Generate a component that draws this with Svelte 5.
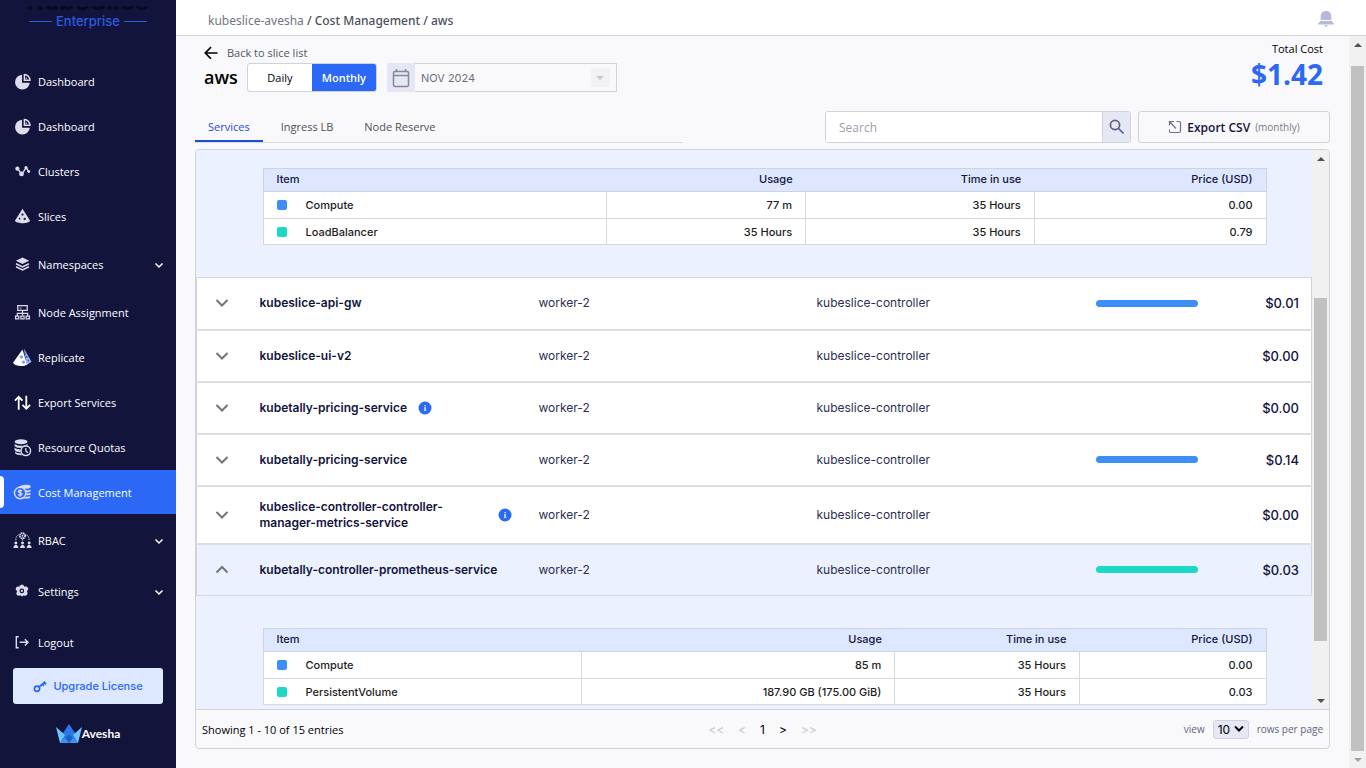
<script lang="ts">
  interface NavItem {
    label: string;
    icon: string;
    size?: 'tall';
    expandable?: boolean;
    active?: boolean;
  }

  interface CostItem {
    item: string;
    usage: string;
    time: string;
    price: string;
    color: string;
  }

  interface Service {
    name: string;
    bar?: string;
    price: string;
    info?: boolean;
    open?: boolean;
  }

  const BLUE = '#3d8ff5';
  const TEAL = '#1dd8c5';

  const nav: NavItem[] = [
    { label: 'Dashboard', icon: 'pie' },
    { label: 'Dashboard', icon: 'pie' },
    { label: 'Clusters', icon: 'clusters' },
    { label: 'Slices', icon: 'slice' },
    { label: 'Namespaces', icon: 'layers', size: 'tall', expandable: true },
    { label: 'Node Assignment', icon: 'nodes' },
    { label: 'Replicate', icon: 'replicate' },
    { label: 'Export Services', icon: 'export' },
    { label: 'Resource Quotas', icon: 'quotas' },
    { label: 'Cost Management', icon: 'cost', active: true },
    { label: 'RBAC', icon: 'rbac', size: 'tall', expandable: true },
    { label: 'Settings', icon: 'settings', size: 'tall', expandable: true },
    { label: 'Logout', icon: 'logout', size: 'tall' }
  ];

  const services: Service[] = [
    { name: 'kubeslice-api-gw', bar: BLUE, price: '$0.01' },
    { name: 'kubeslice-ui-v2', price: '$0.00' },
    { name: 'kubetally-pricing-service', price: '$0.00', info: true },
    { name: 'kubetally-pricing-service', bar: BLUE, price: '$0.14' },
    { name: 'kubeslice-controller-controller-manager-metrics-service', price: '$0.00', info: true },
    { name: 'kubetally-controller-prometheus-service', bar: TEAL, price: '$0.03', open: true }
  ];

  const loadBalancerCosts: CostItem[] = [
    { item: 'Compute', usage: '77 m', time: '35 Hours', price: '0.00', color: BLUE },
    { item: 'LoadBalancer', usage: '35 Hours', time: '35 Hours', price: '0.79', color: TEAL }
  ];

  const prometheusCosts: CostItem[] = [
    { item: 'Compute', usage: '85 m', time: '35 Hours', price: '0.00', color: BLUE },
    { item: 'PersistentVolume', usage: '187.90 GB (175.00 GiB)', time: '35 Hours', price: '0.03', color: TEAL }
  ];

  const tabs = ['Services', 'Ingress LB', 'Node Reserve'];

  let activeTab = $state('Services');
  let period = $state('Monthly');
  let search = $state('');
</script>

{#snippet navIcon(name: string)}
  <svg class="nav-icon" viewBox="0 0 20 20" fill="currentColor" aria-hidden="true">
    {#if name === 'pie'}
      <path d="M9.500 2.800a7.800 7.800 0 1 0 8.200 8.500H9.500z" />
      <path d="M12 2.600v6h5.800a6 6 0 0 0-5.800-6z" fill="none" stroke="currentColor" stroke-width="1.600" />
      <circle cx="14" cy="6.500" r=".8" />
    {:else if name === 'clusters'}
      <path d="M5 7l4 6 5-7 3 5" fill="none" stroke="currentColor" stroke-width="1.500" />
      <circle cx="4.600" cy="7" r="2.200" />
      <circle cx="9" cy="12.500" r="2.500" />
      <circle cx="13.700" cy="6" r="1.700" />
      <circle cx="16.500" cy="10" r="1.500" />
    {:else if name === 'slice'}
      <path fill-rule="evenodd" d="M10 1.800L2 14.500c1.500 3.500 14.500 3.500 16 0zM10 6.800a1.200 1.200 0 1 1 0 2.400 1.200 1.200 0 0 1 0-2.400zM12.300 11.300a1.200 1.200 0 1 1 0 2.400 1.200 1.200 0 0 1 0-2.400z" />
      <circle cx="7" cy="12.200" r=".9" fill="#12143c" />
    {:else if name === 'layers'}
      <path d="M10 2.500l7 3.600-7 3.500-7-3.500z" />
      <path d="M3.200 9.200l6.800 3.400 6.800-3.400M3.200 12.400l6.800 3.400 6.800-3.400" fill="none" stroke="currentColor" stroke-width="1.600" />
    {:else if name === 'nodes'}
      <path d="M5 2.800h10v5H5zM10 8v5M4.500 14v-3h11v3M2.700 13.800h3.400v3H2.700zM8.300 13.800h3.400v3H8.300zM13.900 13.800h3.400v3h-3.400z" fill="none" stroke="currentColor" stroke-width="1.300" />
      <path d="M7 4.800h2v1H7z" />
    {:else if name === 'replicate'}
      <path d="M11.500 .5l8 14-5 3.500z" fill="#9db8f5" />
      <path d="M12.300 5l4.800 10" stroke="#2b5fd0" stroke-width="1.500" stroke-dasharray="2 2" />
      <path d="M10 1.500L0 15.500c2 4 11.500 4.500 14.800 1.800z" fill="#fff" />
      <circle cx="8.800" cy="9.500" r="1.800" fill="#7ca2f5" />
      <circle cx="11" cy="14.800" r="1.700" fill="#7ca2f5" />
    {:else if name === 'export'}
      <path d="M6 17.500V4M2 8l4-4 4 4M14 3v13.500M10 12.500l4 4 4-4" fill="none" stroke="#fff" stroke-width="1.900" />
    {:else if name === 'quotas'}
      <ellipse cx="8.500" cy="4" rx="6.800" ry="2.700" />
      <path d="M1.700 6c2 3 11.600 3 13.600 0v2.300C12 7.500 9.500 9 8.500 10.500c-3 .1-6-.5-6.800-2zM1.700 10c1.500 1.800 4 2 6.200 2v3c-3 0-5.700-.6-6.200-2zM2.200 14.600c1.500 1.400 4 1.500 6 1.500l1.500 2c-3 .2-6.800-.5-7.500-2z" />
      <circle cx="13.500" cy="13.500" r="5" fill="#12143c" stroke="currentColor" stroke-width="1.500" />
      <path d="M13.500 10.500v3.300l2.200 1.700" fill="none" stroke="currentColor" stroke-width="1.300" />
    {:else if name === 'cost'}
      <path d="M6 4C9 1.500 16 1 18.500 2.800v2c-2 1.400-5.500 1.600-7.500 1zM13 7.700c2.200.3 4.200 0 5.500-.9v1.900c-1.200.9-3.200 1.100-4.900 1zM14 11.100c1.700 0 3.300-.2 4.500-.8v1.800c-1 .6-3 .9-4.500.8zM13 14.500c1.800 0 3.800-.2 5-.9v1.800c-1.500 1-5.500 1.200-7.500.8z" />
      <circle cx="7.500" cy="10.500" r="6" fill="none" stroke="currentColor" stroke-width="1.500" />
      <path d="M9.500 8.500c-1-1-4-.8-3.800.6.200 1.500 3.800.9 3.800 2.600 0 1.300-3 1.500-4.100.4M7.500 6.500v8" fill="none" stroke="currentColor" stroke-width="1.300" />
    {:else if name === 'rbac'}
      <circle cx="10" cy="5" r="2.800" fill="none" stroke="currentColor" stroke-width="1.800" stroke-dasharray="1.700 .5" />
      <circle cx="10" cy="5" r="1" />
      <path d="M3 9.500c0-3 1-5 3.500-5.500M17 9.500c0-3-1-5-3.500-5.500M10 8.500v2.500" fill="none" stroke="currentColor" stroke-dasharray="1.500 1" />
      <circle cx="3" cy="12.500" r="1.500" />
      <circle cx="10" cy="12.500" r="1.500" />
      <circle cx="17" cy="12.500" r="1.500" />
      <path d="M.5 18v-1.500l1.700-2h1.600l1.700 2V18zM7.500 18v-1.500l1.700-2h1.600l1.700 2V18zM14.500 18v-1.500l1.700-2h1.600l1.700 2V18z" />
    {:else if name === 'settings'}
      <path fill-rule="evenodd" d="M9.500 3c1.500 0 2 .7 2.300 2 1.700-.6 3.600 0 4.100 1.500.4 1.400-.3 2.200-1.400 3 1 1.300 1.200 2.800.1 4.200-1.200 1-2.400.9-3.500.2-.5.500-.8 1.200-1.600 1.200s-1.200-.6-1.500-1.200c-1.300.7-2.800.7-3.800-.3-1-1.200-.6-2.800.3-4.100C3.100 8.700 2.500 7.800 3 6.500c.6-1.400 2-1.900 3.900-1.500.3-1.300 1-2 2.600-2zM9.300 6.900a2.500 2.500 0 1 0 0 5 2.500 2.500 0 0 0 0-5z" />
      <circle cx="9.300" cy="9.400" r="1.200" />
    {:else if name === 'logout'}
      <path d="M6 4H3.500v11.500H6M7 9.800h8.500M12.500 6.500l3.300 3.300-3.300 3.300" fill="none" stroke="currentColor" stroke-width="1.500" />
    {/if}
  </svg>
{/snippet}

{#snippet costTable(rows: CostItem[], widths: number[])}
  <table class="cost-table">
    <colgroup>
      {#each widths as width}
        <col style="width: {width}%" />
      {/each}
    </colgroup>
    <thead>
      <tr>
        <th>Item</th>
        <th>Usage</th>
        <th>Time in use</th>
        <th>Price (USD)</th>
      </tr>
    </thead>
    <tbody>
      {#each rows as row}
        <tr>
          <td>
            <div class="item-cell">
              <span class="swatch" style="background: {row.color}"></span>
              <span>{row.item}</span>
            </div>
          </td>
          <td>{row.usage}</td>
          <td>{row.time}</td>
          <td>{row.price}</td>
        </tr>
      {/each}
    </tbody>
  </table>
{/snippet}

{#snippet scrollbar(kind: string)}
  <div class="scrollbar {kind}" aria-hidden="true">
    <span class="arrow up"></span>
    <span class="track"><span class="thumb"></span></span>
    <span class="arrow down"></span>
  </div>
{/snippet}

<div class="app">
  <aside class="sidebar">
    <div class="product">KubeSlice</div>
    <div class="edition"><span>Enterprise</span></div>
    <nav>
      {#each nav as item}
        <a href="#top" class="nav-item {item.size ?? ''}" class:active={item.active}>
          {@render navIcon(item.icon)}
          <span class="nav-label">{item.label}</span>
          {#if item.expandable}
            <svg class="nav-chevron" viewBox="0 0 10 10" aria-hidden="true">
              <path d="M1.500 4.500L5 8l3.500-3.500" fill="none" stroke="currentColor" stroke-width="1.500" />
            </svg>
          {/if}
        </a>
      {/each}
    </nav>
    <button class="upgrade">
      <svg viewBox="0 0 14 14" width="14" height="14" fill="none" stroke="currentColor" stroke-width="1.700" aria-hidden="true">
        <circle cx="4" cy="9.800" r="2.600" />
        <path d="M6 8l6-5M9 4.500l2 2.500M11 2.500l2 3" />
      </svg>
      Upgrade License
    </button>
    <div class="brand">
      <svg viewBox="0 0 26 19" width="26" height="19" aria-hidden="true">
        <path d="M4 19L7 9l6-9 6 9 3 10z" fill="#2b78ea" />
        <path d="M0 3l9 8-5 8z" fill="#6fc3ff" />
        <path d="M26 3l-9 8 5 8z" fill="#6fc3ff" />
        <path d="M13 10l9 9H4z" fill="#3f94f2" />
        <path d="M13 10l4 4-4 5-4-5z" fill="#1f5fc4" />
      </svg>
      <span>Avesha</span>
    </div>
  </aside>

  <div class="main">
    <header class="topbar">
      <div class="crumbs"><a href="#top">kubeslice-avesha</a> / Cost Management / aws</div>
      <svg class="bell" viewBox="0 0 16 18" width="16" height="18" fill="currentColor" aria-hidden="true">
        <path d="M8 0c3.500 0 5.300 2.200 5.300 5.500V9H2.700V5.500C2.700 2.200 4.500 0 8 0zM2.500 10h11l2.300 2.500v1H.2v-1zM6 14.200h4L8 16.200z" />
      </svg>
    </header>

    <div class="body">
      <main class="content">
        <div class="summary">
          <div>
            <a class="back" href="#top">
              <svg viewBox="0 0 14 14" width="14" height="14" fill="none" stroke="currentColor" stroke-width="1.700" aria-hidden="true">
                <path d="M13.500 8H1.500M7 2.200L1.300 8 7 13.800" />
              </svg>
              <span>Back to slice list</span>
            </a>
            <div class="filters">
              <h1>aws</h1>
              <div class="toggle">
                {#each ['Daily', 'Monthly'] as option}
                  <button class:selected={period === option} onclick={() => (period = option)}>{option}</button>
                {/each}
              </div>
              <div class="month">
                <span class="month-icon">
                  <svg viewBox="0 0 18 20" width="18" height="20" fill="none" stroke="#85889b" stroke-width="1.500" aria-hidden="true">
                    <rect x="1.500" y="3.500" width="15" height="15" rx="1.500" />
                    <path d="M1.500 7.500h15M4.500 1v3M13.500 1v3" />
                  </svg>
                </span>
                <select aria-label="Month">
                  <option>NOV 2024</option>
                </select>
                <span class="month-arrow"></span>
              </div>
            </div>
          </div>
          <div class="total">
            <div class="total-label">Total Cost</div>
            <div class="total-value">$1.42</div>
          </div>
        </div>

        <div class="toolbar">
          <div class="tabs" role="tablist">
            {#each tabs as tab}
              <button role="tab" aria-selected={activeTab === tab} class:current={activeTab === tab} onclick={() => (activeTab = tab)}>{tab}</button>
            {/each}
          </div>
          <div class="search">
            <input type="text" placeholder="Search" aria-label="Search" bind:value={search} />
            <button aria-label="Run search">
              <svg viewBox="0 0 16 16" width="16" height="16" fill="none" stroke="#5b5f86" stroke-width="1.700" aria-hidden="true">
                <circle cx="6" cy="6" r="4.600" />
                <path d="M9.500 9.500l5 5" />
              </svg>
            </button>
          </div>
          <button class="export">
            <svg viewBox="0 0 14 14" width="14" height="14" fill="none" stroke="#6d708c" stroke-width="1.200" aria-hidden="true">
              <path d="M8.500 1.500H11q1.500 0 1.500 1.500v8q0 1.500-1.500 1.500H3Q1.500 12.500 1.500 11V9.500M1.500 5.500v-4h4.500M1.500 1.500L8 8.500" />
            </svg>
            Export CSV <small>(monthly)</small>
          </button>
        </div>

        <section class="panel">
          <div class="list-wrap">
            <div class="list">
              <table class="services">
                <colgroup>
                  <col class="col-toggle" />
                  <col />
                  <col />
                  <col />
                  <col class="col-bar" />
                  <col class="col-price" />
                </colgroup>
                <tbody>
                  <tr class="detail first">
                    <td colspan="6">{@render costTable(loadBalancerCosts, [34.2, 19.9, 22.8, 23.1])}</td>
                  </tr>
                  {#each services as service}
                    <tr class="service" class:open={service.open}>
                      <td class="toggle-cell">
                        <button class="expand" aria-label="Toggle {service.name}">
                          <svg viewBox="0 0 14 10" width="14" height="10" fill="none" stroke="#757575" stroke-width="2" aria-hidden="true">
                            <path d={service.open ? 'M1.500 7.500L7 2l5.500 5.500' : 'M1.500 2L7 7.500 12.500 2'} />
                          </svg>
                        </button>
                      </td>
                      <td class="name">
                        <div class="name-cell">
                          <span>{service.name}</span>
                          {#if service.info}
                            <svg viewBox="0 0 14 14" width="14" height="14" aria-hidden="true">
                              <circle cx="7" cy="7" r="6.500" fill="#2969f5" />
                              <path d="M6.500 4h1.300v1.300H6.500zM6.100 6.300h1.700v2.600h.6v.9H5.900v-.9h.6V7.200h-.4z" fill="#fff" />
                            </svg>
                          {/if}
                        </div>
                      </td>
                      <td>worker-2</td>
                      <td>kubeslice-controller</td>
                      <td class="bar-cell">
                        {#if service.bar}
                          <div class="bar" style="background: {service.bar}"></div>
                        {/if}
                      </td>
                      <td class="price">{service.price}</td>
                    </tr>
                  {/each}
                  <tr class="detail">
                    <td colspan="6">{@render costTable(prometheusCosts, [31.8, 31.2, 18.4, 18.6])}</td>
                  </tr>
                </tbody>
              </table>
            </div>
            {@render scrollbar('inner')}
          </div>

          <footer>
            <div class="showing">Showing 1 - 10 of 15 entries</div>
            <div class="pager">
              <button disabled>&lt;&lt;</button>
              <button disabled>&lt;</button>
              <button>1</button>
              <button>&gt;</button>
              <button disabled>&gt;&gt;</button>
            </div>
            <div class="page-size">
              <label for="rows">view</label>
              <span class="rows-select">
                <select id="rows">
                  <option>10</option>
                </select>
                <svg viewBox="0 0 10 8" width="10" height="8" aria-hidden="true">
                  <path d="M1 1.500l4 4 4-4" fill="none" stroke="#000" stroke-width="2" />
                </svg>
              </span>
              <span>rows per page</span>
            </div>
          </footer>
        </section>
      </main>
      {@render scrollbar('outer')}
    </div>
  </div>
</div>

<style>
  :global(body) {
    margin: 0;
    font-family: 'Open Sans', 'Noto Sans', sans-serif;
    color: #000;
  }

  * {
    box-sizing: border-box;
  }

  button,
  input,
  select {
    font-family: inherit;
    margin: 0;
    padding: 0;
    border: none;
    background: none;
  }

  a {
    color: inherit;
    text-decoration: none;
  }

  .app {
    display: flex;
    height: 100vh;
    overflow: hidden;
  }

  /* sidebar */
  .sidebar {
    display: flex;
    flex-direction: column;
    width: 176px;
    flex-shrink: 0;
    background: #12143c;
    color: #fff;
  }

  .product {
    display: flex;
    align-items: flex-end;
    justify-content: center;
    height: 4px;
    margin-top: 6px;
    overflow: hidden;
    font-family: Inter, sans-serif;
    font-size: 25px;
    line-height: 18px;
    font-weight: 700;
    color: #080a20;
  }

  .edition {
    display: flex;
    align-items: center;
    gap: 4px;
    height: 22px;
    margin: 0 29px 27px;
    font-family: Inter, sans-serif;
    font-size: 13px;
    font-weight: 500;
    color: #2b5be0;
  }

  .edition::before,
  .edition::after {
    content: '';
    flex: 1;
    height: 1px;
    background: #2b5be0;
  }

  .nav-item {
    display: flex;
    align-items: center;
    height: 44px;
    margin-bottom: 1px;
    padding: 0 12px 0 13px;
    font-size: 11px;
    font-weight: 500;
    color: #fff;
  }

  .nav-item.tall {
    height: 50px;
  }

  .nav-item.active {
    position: relative;
    background: #2a68f5;
  }

  .nav-item.active::before {
    content: '';
    position: absolute;
    left: 0;
    top: 6px;
    width: 4px;
    height: 32px;
    border-radius: 0 4px 4px 0;
    background: #fff;
  }

  .nav-icon {
    width: 19px;
    height: 19px;
    margin-right: 6px;
    color: #dcdcec;
  }

  .nav-label {
    flex: 1;
  }

  .nav-chevron {
    width: 10px;
    height: 10px;
  }

  .upgrade {
    display: flex;
    align-items: center;
    justify-content: center;
    gap: 6px;
    height: 36px;
    margin: 0 13px;
    border-radius: 3px;
    background: #dde7ff;
    font-family: Inter, sans-serif;
    font-size: 11px;
    font-weight: 500;
    color: #2a68f5;
  }

  .brand {
    display: flex;
    align-items: center;
    justify-content: center;
    margin-top: 20px;
    font-family: Lato, sans-serif;
    font-size: 12px;
    font-weight: 700;
  }

  /* page frame */
  .main {
    display: flex;
    flex-direction: column;
    flex: 1;
    min-width: 0;
    background: #f9f9fc;
  }

  .topbar {
    display: flex;
    align-items: center;
    justify-content: space-between;
    height: 36px;
    padding: 5px 32px 0;
    border-bottom: 1px solid #d1d3dc;
    background: #fff;
  }

  .crumbs {
    font-family: 'Noto Sans', sans-serif;
    font-size: 12px;
    font-weight: 500;
    color: #4b5060;
  }

  .crumbs a {
    font-weight: 400;
    color: #71757f;
  }

  .bell {
    color: #b7b9da;
  }

  .body {
    display: flex;
    flex: 1;
    min-height: 0;
  }

  .content {
    display: flex;
    flex-direction: column;
    flex: 1;
    min-width: 0;
    padding: 5px 19px 19px;
  }

  .summary {
    display: flex;
    justify-content: space-between;
    height: 70px;
    padding: 0 7px 0 9px;
  }

  .back {
    display: flex;
    align-items: center;
    gap: 9px;
    height: 22px;
    font-size: 11px;
    color: #000;
  }

  .back span {
    color: #50555f;
  }

  .filters {
    display: flex;
    align-items: center;
    height: 29px;
  }

  h1 {
    margin: 0 9px 0 0;
    font-size: 18px;
    line-height: 29px;
    font-weight: 600;
  }

  .toggle {
    display: flex;
    width: 130px;
    height: 29px;
    margin-right: 10px;
    border: 1px solid #d1d3dc;
    border-radius: 3px;
    overflow: hidden;
    background: #fff;
  }

  .toggle button {
    flex: 1;
    font-size: 11px;
    font-weight: 500;
  }

  .toggle button.selected {
    background: #2a68f5;
    font-weight: 600;
    color: #fff;
  }

  .month {
    display: flex;
    align-items: center;
    width: 230px;
    height: 29px;
    padding-right: 6px;
    border: 1px solid #d1d3dc;
    border-left: none;
    border-radius: 3px 0 0 3px;
  }

  .month-icon {
    display: flex;
    align-items: center;
    justify-content: center;
    width: 28px;
    height: 29px;
    border-radius: 3px 0 0 3px;
    background: #e5e7f4;
  }

  .month select {
    flex: 1;
    padding-left: 6px;
    appearance: none;
    font-family: Inter, sans-serif;
    font-size: 11px;
    color: #6b6f7b;
  }

  .month-arrow {
    display: flex;
    align-items: center;
    justify-content: center;
    width: 19px;
    height: 19px;
    border-radius: 2px;
    background: #f2f2f5;
  }

  .month-arrow::before {
    content: '';
    border: 4px solid transparent;
    border-top-color: #c9cad0;
    border-bottom: none;
  }

  .total {
    text-align: right;
  }

  .total-label {
    font-size: 11px;
    line-height: 16px;
    font-weight: 500;
  }

  .total-value {
    font-size: 28px;
    line-height: 34px;
    font-weight: 700;
    color: #2a68f5;
  }

  /* tabs and search */
  .toolbar {
    display: flex;
    height: 32px;
    margin-bottom: 6px;
  }

  .tabs {
    display: flex;
    gap: 5px;
    width: 43%;
    margin-right: auto;
    border-bottom: 1px solid #d9dae0;
  }

  .tabs button {
    height: 31px;
    padding: 2px 13px 0;
    border-bottom: 2px solid transparent;
    font-size: 11px;
    font-weight: 500;
    color: #4b4f5a;
  }

  .tabs button.current {
    border-color: #1d4ed8;
    color: #1d4ed8;
  }

  .search {
    display: flex;
    width: 306px;
    margin-right: 7px;
    border: 1px solid #d1d3dc;
    border-radius: 3px;
    overflow: hidden;
  }

  .search input {
    flex: 1;
    min-width: 0;
    padding: 0 13px;
    background: #fff;
    font-size: 12px;
  }

  .search input::placeholder {
    color: #9ca0ad;
  }

  .search button {
    display: flex;
    align-items: center;
    justify-content: center;
    width: 28px;
    border-left: 1px solid #d1d3dc;
    background: #e5e7f4;
  }

  .export {
    display: flex;
    align-items: center;
    justify-content: center;
    gap: 5px;
    width: 192px;
    border: 1px solid #d1d3dc;
    border-radius: 3px;
    font-size: 12px;
    font-weight: 600;
    color: #12143c;
  }

  .export small {
    font-size: 10px;
    font-weight: 400;
    color: #777b88;
  }

  /* services panel */
  .panel {
    display: flex;
    flex-direction: column;
    flex: 1;
    min-height: 0;
    border: 1px solid #d1d3dc;
    border-radius: 4px;
    overflow: hidden;
    font-family: Inter, Roboto, sans-serif;
  }

  .list-wrap {
    display: flex;
    flex: 1;
    min-height: 0;
  }

  .list {
    flex: 1;
    overflow: hidden;
    background: #ebf1ff;
  }

  .services {
    width: 100%;
    border-collapse: collapse;
    table-layout: fixed;
  }

  .col-toggle {
    width: 52px;
  }

  .col-bar {
    width: 128px;
  }

  .col-price {
    width: 101px;
  }

  .detail > td {
    padding: 32px 45px 32px 66px;
  }

  .detail.first > td {
    padding-top: 18px;
  }

  .service > td {
    height: 52px;
    padding: 0 12px;
    border-top: 1px solid #d5d7dd;
    border-bottom: 2px solid #dedee0;
    background: #fff;
    font-size: 12px;
    line-height: 16px;
    color: #2c2f52;
  }

  .service > td:first-child {
    border-left: 1px solid #d1d3dc;
  }

  .service > td:last-child {
    border-right: 1px solid #d1d3dc;
  }

  .service.open > td {
    border-bottom: 1px solid #d8dae2;
    background: #ebf1ff;
  }

  .service > td.toggle-cell {
    padding: 0 0 0 18px;
  }

  .expand {
    display: block;
  }

  .service > td.name {
    padding: 0 4px 0 11px;
    font-weight: 600;
    color: #12143c;
  }

  .name-cell {
    display: flex;
    align-items: center;
    gap: 11px;
  }

  .name-cell span {
    padding: 12px 0;
  }

  .name-cell svg {
    flex-shrink: 0;
    margin-right: 11px;
  }

  .service > td.bar-cell {
    padding: 0 13px;
  }

  .bar {
    height: 7px;
    border-radius: 4px;
  }

  .service > td.price {
    text-align: right;
    font-size: 13px;
    font-weight: 500;
    color: #12143c;
  }

  /* cost breakdown */
  .cost-table {
    width: 100%;
    border-collapse: collapse;
    table-layout: fixed;
    font-size: 11px;
    line-height: 14px;
    font-weight: 500;
  }

  .cost-table th {
    height: 23px;
    padding: 0 13px 2px;
    border: 1px solid #d1d3dc;
    border-width: 1px 0;
    background: #dde7ff;
    font-weight: 500;
    text-align: right;
    color: #12143c;
  }

  .cost-table th:first-child {
    border-left-width: 1px;
    text-align: left;
  }

  .cost-table th:last-child {
    border-right-width: 1px;
  }

  .cost-table td {
    height: 26px;
    padding: 0 13px;
    border: 1px solid #d6d8de;
    background: #fff;
    text-align: right;
    color: #1d1d22;
  }

  .cost-table tr:first-child td {
    height: 27px;
  }

  .item-cell {
    display: flex;
    align-items: center;
    gap: 19px;
  }

  .swatch {
    width: 10px;
    height: 10px;
    border-radius: 2px;
  }

  /* footer */
  footer {
    display: flex;
    align-items: center;
    justify-content: space-between;
    height: 39px;
    padding: 0 6px;
    border-top: 1px solid #d1d3dc;
    font-size: 11px;
  }

  .showing {
    flex: 1;
    font-family: 'Open Sans', 'Noto Sans', sans-serif;
  }

  .pager {
    display: flex;
    gap: 14px;
  }

  .pager button {
    font-size: 12px;
  }

  .pager button:disabled {
    color: #c3c7d3;
  }

  .page-size {
    display: flex;
    flex: 1;
    align-items: center;
    justify-content: flex-end;
    gap: 8px;
    font-family: 'Open Sans', 'Noto Sans', sans-serif;
    font-size: 10px;
    color: #60647f;
  }

  .rows-select {
    display: flex;
    align-items: center;
    height: 19px;
    padding: 0 4px;
    border: 1px solid #d1d3dc;
    border-radius: 3px;
    background: #e5e7f4;
  }

  .rows-select select {
    width: 16px;
    appearance: none;
    font-family: Inter, sans-serif;
    font-size: 12px;
    color: #000;
  }

  /* scrollbars */
  .scrollbar {
    display: flex;
    flex-direction: column;
    flex-shrink: 0;
    width: 17px;
    background: #f1f1f1;
  }

  .arrow {
    display: flex;
    align-items: center;
    justify-content: center;
    height: 17px;
  }

  .arrow::before {
    content: '';
    border: 4px solid transparent;
  }

  .arrow.up::before {
    border-top: none;
    border-bottom-color: #505050;
  }

  .arrow.down::before {
    border-bottom: none;
    border-top-color: #505050;
  }

  .outer .arrow.down::before {
    border-top-color: #a3a3a3;
  }

  .track {
    flex: 1;
    padding: 0 2px;
  }

  .thumb {
    display: block;
    background: #c1c1c1;
  }

  .outer .track {
    padding-top: 13px;
  }

  .outer .thumb {
    height: 100%;
  }

  .inner .track {
    padding-top: 131px;
  }

  .inner .thumb {
    height: 87%;
  }
</style>
